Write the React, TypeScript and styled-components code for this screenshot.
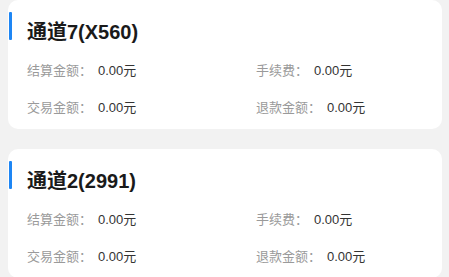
import React from 'react';
import styled, { createGlobalStyle } from 'styled-components';

const GlobalStyle = createGlobalStyle`
  html, body {
    margin: 0;
    padding: 0;
    background: #f2f2f2;
  }
  body {
    font-family: "Liberation Sans", "Noto Sans CJK SC", sans-serif;
  }
`;

const Page = styled.div`
  display: flex;
  flex-direction: column;
  gap: 20px;
  padding: 0 7px 0 8px;
`;

const Card = styled.div`
  background: #ffffff;
  border-radius: 10px;
  padding: 12px 0 11px 0;
`;

const Header = styled.div`
  display: flex;
  align-items: flex-start;
`;

const Bar = styled.div`
  width: 3px;
  height: 28px;
  margin-left: 1px;
  background: #1e86f4;
  border-radius: 1px;
`;

const Title = styled.div`
  margin: 6px 0 0 15px;
  font-size: 20px;
  line-height: 28px;
  font-weight: 700;
  color: #1a1a1a;
`;

const Grid = styled.div`
  display: grid;
  grid-template-columns: 229px 1fr;
  row-gap: 17px;
  margin-top: 15px;
  padding-left: 19px;
`;

const Item = styled.div`
  display: flex;
  align-items: center;
  font-size: 13px;
  line-height: 20px;
`;

const Label = styled.span`
  color: #9a9a9a;
`;

const Value = styled.span`
  margin-left: 6px;
  color: #333333;
`;

interface Channel {
  name: string;
  settle: string;
  fee: string;
  trade: string;
  refund: string;
}

const channels: Channel[] = [
  { name: '通道7(X560)', settle: '0.00元', fee: '0.00元', trade: '0.00元', refund: '0.00元' },
  { name: '通道2(2991)', settle: '0.00元', fee: '0.00元', trade: '0.00元', refund: '0.00元' },
];

function ChannelCard({ channel }: { channel: Channel }): JSX.Element {
  return (
    <Card>
      <Header>
        <Bar />
        <Title>{channel.name}</Title>
      </Header>
      <Grid>
        <Item>
          <Label>结算金额：</Label>
          <Value>{channel.settle}</Value>
        </Item>
        <Item>
          <Label>手续费：</Label>
          <Value>{channel.fee}</Value>
        </Item>
        <Item>
          <Label>交易金额：</Label>
          <Value>{channel.trade}</Value>
        </Item>
        <Item>
          <Label>退款金额：</Label>
          <Value>{channel.refund}</Value>
        </Item>
      </Grid>
    </Card>
  );
}

export default function App(): JSX.Element {
  return (
    <>
      <GlobalStyle />
      <Page>
        {channels.map((c) => (
          <ChannelCard key={c.name} channel={c} />
        ))}
      </Page>
    </>
  );
}
